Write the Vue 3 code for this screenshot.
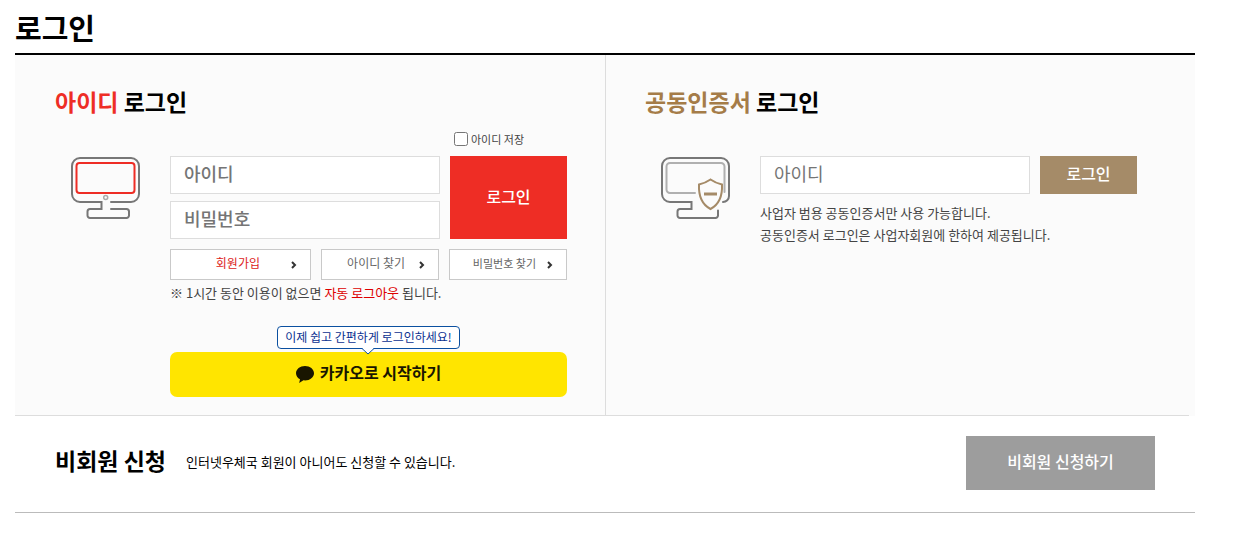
<script setup>
import { ref } from 'vue'

const userId = ref('')
const password = ref('')
const certId = ref('')
const saveId = ref(false)

const links = [
  { label: '회원가입', kind: 'join' },
  { label: '아이디 찾기', kind: 'find-id' },
  { label: '비밀번호 찾기', kind: 'find-pw' },
]
</script>

<template>
  <main class="page">
    <h1 class="title">로그인</h1>

    <div class="panel">
      <div class="columns">
        <section class="column">
          <h2 class="heading"><span class="red">아이디</span> 로그인</h2>
          <div class="body">
            <svg class="icon" viewBox="0 0 70 64" fill="none" stroke="#777" stroke-width="2" stroke-linecap="round" aria-hidden="true">
              <path d="M40 46H60a8 8 0 0 0 8-8V10a8 8 0 0 0-8-8H9a8 8 0 0 0-8 8V38a8 8 0 0 0 8 8H30.500V53H19a2.500 2.500 0 0 0-2.500 2.500V59.500a2.500 2.500 0 0 0 2.500 2.500H55.500a2.500 2.500 0 0 0 2.500-2.500V55.500a2.500 2.500 0 0 0-2.500-2.500H40" />
              <rect x="5.500" y="7" width="58" height="30" rx="3" stroke="#ee2d25" />
              <circle cx="34.700" cy="41.500" r="2" stroke="#aaa" stroke-width="1.500" />
            </svg>
            <form class="form" @submit.prevent>
              <label class="save"><input v-model="saveId" type="checkbox" />아이디 저장</label>
              <div class="entry">
                <div class="fields">
                  <input v-model="userId" class="field strong" type="text" placeholder="아이디" aria-label="아이디" />
                  <input v-model="password" class="field strong" type="password" placeholder="비밀번호" aria-label="비밀번호" />
                </div>
                <button class="submit" type="submit">로그인</button>
              </div>
              <nav class="links">
                <a v-for="link in links" :key="link.kind" href="#" :class="['link', link.kind]">
                  {{ link.label }}
                  <svg class="arrow" viewBox="0 0 6 8" aria-hidden="true"><path d="M1 1l3 3-3 3" fill="none" stroke="#333" stroke-width="2" /></svg>
                </a>
              </nav>
              <p class="notice">※ 1시간 동안 이용이 없으면 <em>자동 로그아웃</em> 됩니다.</p>
              <div class="kakao-area">
                <p class="bubble">
                  이제 쉽고 간편하게 로그인하세요!
                  <svg class="tail" viewBox="0 0 12 7" aria-hidden="true"><path d="M0 0h12L6 6z" fill="#fff" /><path d="M0 .5l6 5.500 6-5.500" fill="none" stroke="#0b50a0" /></svg>
                </p>
                <button class="kakao" type="button">
                  <svg class="talk" viewBox="0 0 18 17" aria-hidden="true"><path d="M9 0C4 0 0 3.200 0 7.200c0 2.600 1.600 4.800 4 6.100L3.200 17l4.200-2.700c.5.100 1 .1 1.600.1 5 0 9-3.200 9-7.200S14 0 9 0z" fill="#191600" /></svg>
                  <span>카카오로 시작하기</span>
                </button>
              </div>
            </form>
          </div>
        </section>

        <section class="column cert">
          <h2 class="heading"><span class="brown">공동인증서</span> 로그인</h2>
          <div class="body">
            <svg class="icon" viewBox="0 0 70 64" fill="none" stroke="#777" stroke-width="2" stroke-linecap="round" aria-hidden="true">
              <path d="M62 46a6 6 0 0 0 6-6V10a8 8 0 0 0-8-8H9a8 8 0 0 0-8 8V38a8 8 0 0 0 8 8H30.500V53H19a2.500 2.500 0 0 0-2.500 2.500V59.500a2.500 2.500 0 0 0 2.500 2.500H54.500a2.500 2.500 0 0 0 2.500-2.500V54.500" />
              <path d="M34 37H9a3.500 3.500 0 0 1-3.500-3.500V10.500A3.500 3.500 0 0 1 9 7H60a3.500 3.500 0 0 1 3.500 3.500V36" stroke="#b0b0b0" />
              <path d="M49.500 23.500C46 26 42 27.500 38 28.500c-.5 11 3 20 11.500 24.500C58 48.500 61.500 39.500 61 28.500 57 27.500 53 26 49.500 23.500z" fill="#fbfbfb" stroke="#a58b68" />
              <path d="M43 38H56" stroke="#a58b68" stroke-width="3" stroke-linecap="butt" />
            </svg>
            <form class="form" @submit.prevent>
              <div class="entry">
                <div class="fields">
                  <input v-model="certId" class="field" type="text" placeholder="아이디" aria-label="인증서 아이디" />
                </div>
                <button class="submit brown-button" type="submit">로그인</button>
              </div>
              <p class="guide">사업자 범용 공동인증서만 사용 가능합니다.<br />공동인증서 로그인은 사업자회원에 한하여 제공됩니다.</p>
            </form>
          </div>
        </section>
      </div>
    </div>

    <section class="guest">
      <h2 class="heading">비회원 신청</h2>
      <p class="guest-text">인터넷우체국 회원이 아니어도 신청할 수 있습니다.</p>
      <button class="guest-button" type="button">비회원 신청하기</button>
    </section>
  </main>
</template>

<style>
body {
  background: #fff;
}
</style>

<style scoped>
.page,
.page * {
  box-sizing: border-box;
}

.page {
  padding: 0 59px 20px 15px;
  color: #000;
  font-family: "Noto Sans CJK KR", sans-serif;
  font-size: 13px;
  line-height: 22px;
}

button,
input {
  margin: 0;
  border: 0;
  border-radius: 0;
  font-family: inherit;
}

h1,
h2,
p {
  margin: 0;
}

.title {
  padding: 7px 0 6px;
  border-bottom: 2px solid #000;
  font-size: 29px;
  font-weight: 700;
  line-height: 40px;
}

.panel {
  padding-right: 6px;
  background: #fbfbfb;
}

.columns {
  display: grid;
  grid-template-columns: calc(50% + 3px) 1fr;
  border-bottom: 1px solid #ddd;
}

.column {
  min-width: 0;
  padding: 30px 38px 18px 40px;
}

.cert {
  padding-left: 39px;
  padding-right: 52px;
  border-left: 1px solid #ddd;
}

.heading {
  font-size: 23px;
  font-weight: 700;
  line-height: 32px;
  white-space: nowrap;
}

.red {
  color: #ee2d25;
}

.brown {
  color: #a57c48;
}

.body {
  display: flex;
  align-items: flex-start;
  margin-top: 14px;
}

.icon {
  flex: none;
  width: 70px;
  height: 64px;
  margin: 25px 29px 0 16px;
}

.form {
  flex: 1;
  min-width: 0;
}

.cert .form {
  padding-top: 25px;
}

.save {
  display: flex;
  align-items: center;
  gap: 3px;
  width: 113px;
  height: 16px;
  margin: 0 0 9px auto;
  color: #444;
  font-size: 11px;
}

.save input {
  width: 14px;
  height: 14px;
}

.entry {
  display: flex;
  gap: 10px;
}

.fields {
  display: flex;
  flex: 1;
  flex-direction: column;
  gap: 7px;
  min-width: 0;
}

.field {
  width: 100%;
  height: 38px;
  padding: 0 13px 4px;
  border: 1px solid #ddd;
  background: #fff;
  color: #333;
  font-size: 18px;
}

.field::placeholder {
  color: #757575;
  opacity: 1;
}

.strong {
  font-weight: 500;
}

.submit {
  width: 117px;
  padding: 0 0 4px;
  background: #ee2d25;
  color: #fff;
  font-size: 16px;
  font-weight: 500;
}

.brown-button {
  width: 97px;
  background: #a58b68;
}

.links {
  display: grid;
  grid-template-columns: 141fr 118fr 118fr;
  gap: 10px;
  margin-top: 10px;
}

.link {
  display: flex;
  align-items: center;
  justify-content: flex-end;
  gap: 14px;
  height: 31px;
  padding: 0 13px 4px;
  border: 1px solid #c9c9c9;
  background: #fff;
  color: #666;
  font-size: 12px;
  text-decoration: none;
  white-space: nowrap;
}

.join {
  gap: 31px;
  color: #d22;
}

.find-pw {
  gap: 11px;
  font-size: 11px;
}

.arrow {
  flex: none;
  width: 6px;
  height: 8px;
  margin-top: 4px;
}

.notice {
  margin-top: 2px;
  color: #444;
}

.notice em {
  color: #d00;
  font-style: normal;
}

.kakao-area {
  display: flex;
  flex-direction: column;
  align-items: center;
  gap: 3px;
  margin-top: 22px;
}

.bubble {
  position: relative;
  height: 23px;
  padding: 0 7px;
  border: 1px solid #0b50a0;
  border-radius: 4px;
  background: #fff;
  color: #0b3190;
  font-size: 12px;
  line-height: 20px;
}

.tail {
  position: absolute;
  top: 21px;
  left: calc(50% - 6px);
  width: 12px;
  height: 7px;
}

.kakao {
  display: flex;
  align-items: center;
  justify-content: center;
  gap: 6px;
  width: 100%;
  height: 45px;
  padding: 0 0 5px;
  border-radius: 7px;
  background: #ffe500;
  color: #191600;
  font-size: 16px;
  font-weight: 700;
}

.talk {
  width: 18px;
  height: 17px;
  margin-top: 5px;
}

.guide {
  margin-top: 8px;
  color: #444;
}

.guest {
  display: flex;
  align-items: center;
  gap: 20px;
  padding: 20px 40px 22px;
  border-bottom: 1px solid #bbb;
}

.guest .heading {
  padding-bottom: 6px;
}

.guest-text {
  padding-bottom: 3px;
}

.guest-button {
  width: 189px;
  height: 54px;
  margin-left: auto;
  padding: 0 0 4px;
  background: #9d9d9d;
  color: #fff;
  font-size: 16px;
  font-weight: 500;
}
</style>
